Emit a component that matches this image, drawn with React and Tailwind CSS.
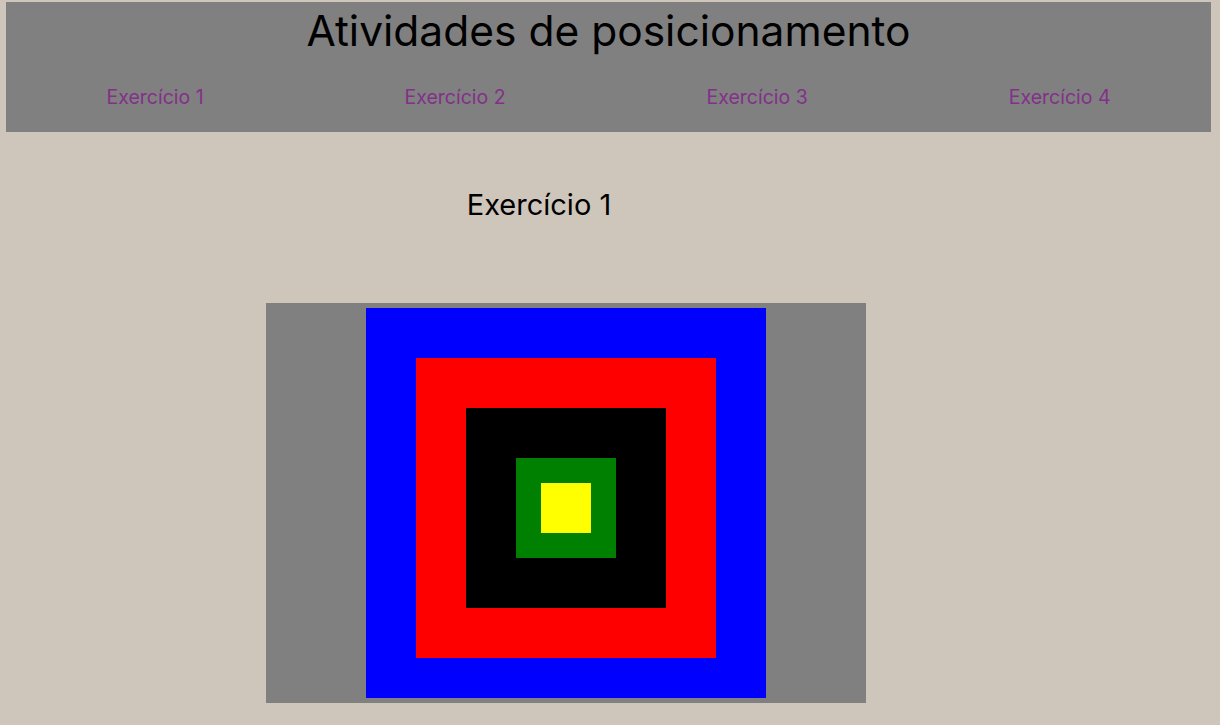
const links = ['Exercício 1', 'Exercício 2', 'Exercício 3', 'Exercício 4'];

export default function App() {
    return (
        <div className="min-h-screen bg-[#cec6bb] pt-[2px] font-['Inter',sans-serif]">
            {/* Header */}
            <header className="ml-[6px] mr-[9px] h-[130px] bg-[#808080] flex flex-col">
                <h1 className="mt-[2px] text-center text-[42.5px] leading-[54px] text-black">
                    Atividades de posicionamento
                </h1>
                <nav className="mt-[26px] flex justify-around">
                    {links.map((l) => (
                        <a key={l} href="#" className="text-[19.5px] leading-[26px] text-[#83308a]">
                            {l}
                        </a>
                    ))}
                </nav>
            </header>

            {/* Exercise */}
            <h2 className="mt-[53px] w-[1078px] text-center text-[29px] leading-[40px] text-black">
                Exercício 1
            </h2>

            <div className="mt-[78px] ml-[266px] w-[600px] h-[400px] bg-[#808080] pt-[5px] pl-[100px]">
                <div className="w-[400px] h-[390px] bg-[#0000ff] pt-[50px] pl-[50px]">
                    <div className="w-[300px] h-[300px] bg-[#ff0000] p-[50px]">
                        <div className="w-[200px] h-[200px] bg-black p-[50px]">
                            <div className="w-[100px] h-[100px] bg-[#008000] p-[25px]">
                                <div className="w-[50px] h-[50px] bg-[#ffff00]" />
                            </div>
                        </div>
                    </div>
                </div>
            </div>
        </div>
    );
}
